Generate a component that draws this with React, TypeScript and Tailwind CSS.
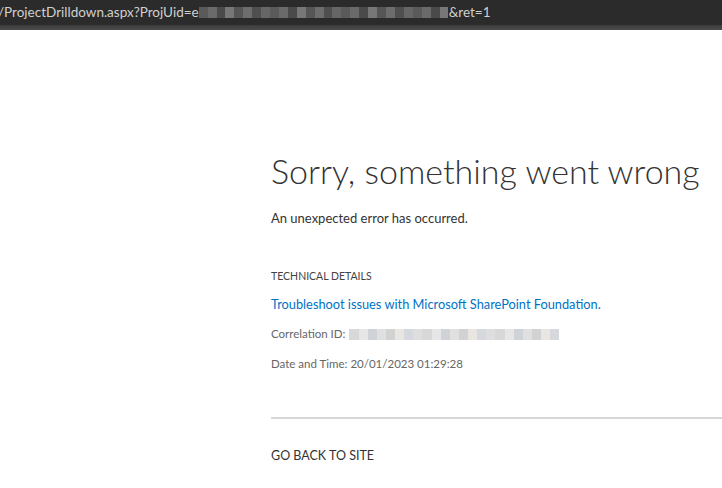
import React from "react";

function Blur({ w, dark }: { w: number; dark?: boolean }) {
  const segs = dark
    ? ["#5a5a5a", "#6a6a6a", "#4a4a4a", "#777", "#555", "#6d6d6d", "#4f4f4f", "#666"]
    : ["#d8d8d8", "#e6e6e6", "#cfd3d8", "#e0e0e0", "#d2d2d2", "#e9e6e2", "#d5d8dc", "#dedede"];
  return (
    <span className="inline-flex h-[11px] items-stretch align-middle" style={{ width: w }}>
      {Array.from({ length: Math.round(w / 9) }).map((_, i) => (
        <span key={i} className="flex-1" style={{ background: segs[i % segs.length] }} />
      ))}
    </span>
  );
}

export default function App() {
  return (
    <div className="w-[722px] h-[488px] overflow-hidden bg-white" style={{ fontFamily: 'Lato, "Noto Sans", sans-serif' }}>
      <div className="h-[25px] bg-[#2b2b2b] flex items-center overflow-hidden whitespace-nowrap">
        <span className="-ml-[2px] text-[13.5px] text-[#d0d0d0] flex items-center leading-none">
          /ProjectDrilldown.aspx?ProjUid=e
          <Blur w={250} dark />
          &amp;ret=1
        </span>
      </div>
      <div className="h-[5px] bg-gradient-to-b from-[#3d3d3d] to-[#4a4a4a]" />
      <div className="pl-[271px] pt-[124px]">
        <h1 className="text-[34px] font-light text-[#333] leading-none whitespace-nowrap">Sorry, something went wrong</h1>
        <p className="mt-[21px] text-[13px] text-[#333]">An unexpected error has occurred.</p>
        <p className="mt-[40px] text-[10.5px] text-[#444]">TECHNICAL DETAILS</p>
        <p className="mt-[11px] text-[12.8px] text-[#0072c6]">Troubleshoot issues with Microsoft SharePoint Foundation.</p>
        <p className="mt-[11px] text-[11.5px] text-[#666] flex items-center gap-[4px]">Correlation ID: <Blur w={210} /></p>
        <p className="mt-[12px] text-[11.5px] text-[#666]">Date and Time: 20/01/2023 01:29:28</p>
        <div className="mt-[45px] h-[2px] bg-[#d6d6d6]" />
        <p className="mt-[28px] text-[12.5px] text-[#333]">GO BACK TO SITE</p>
      </div>
    </div>
  );
}
